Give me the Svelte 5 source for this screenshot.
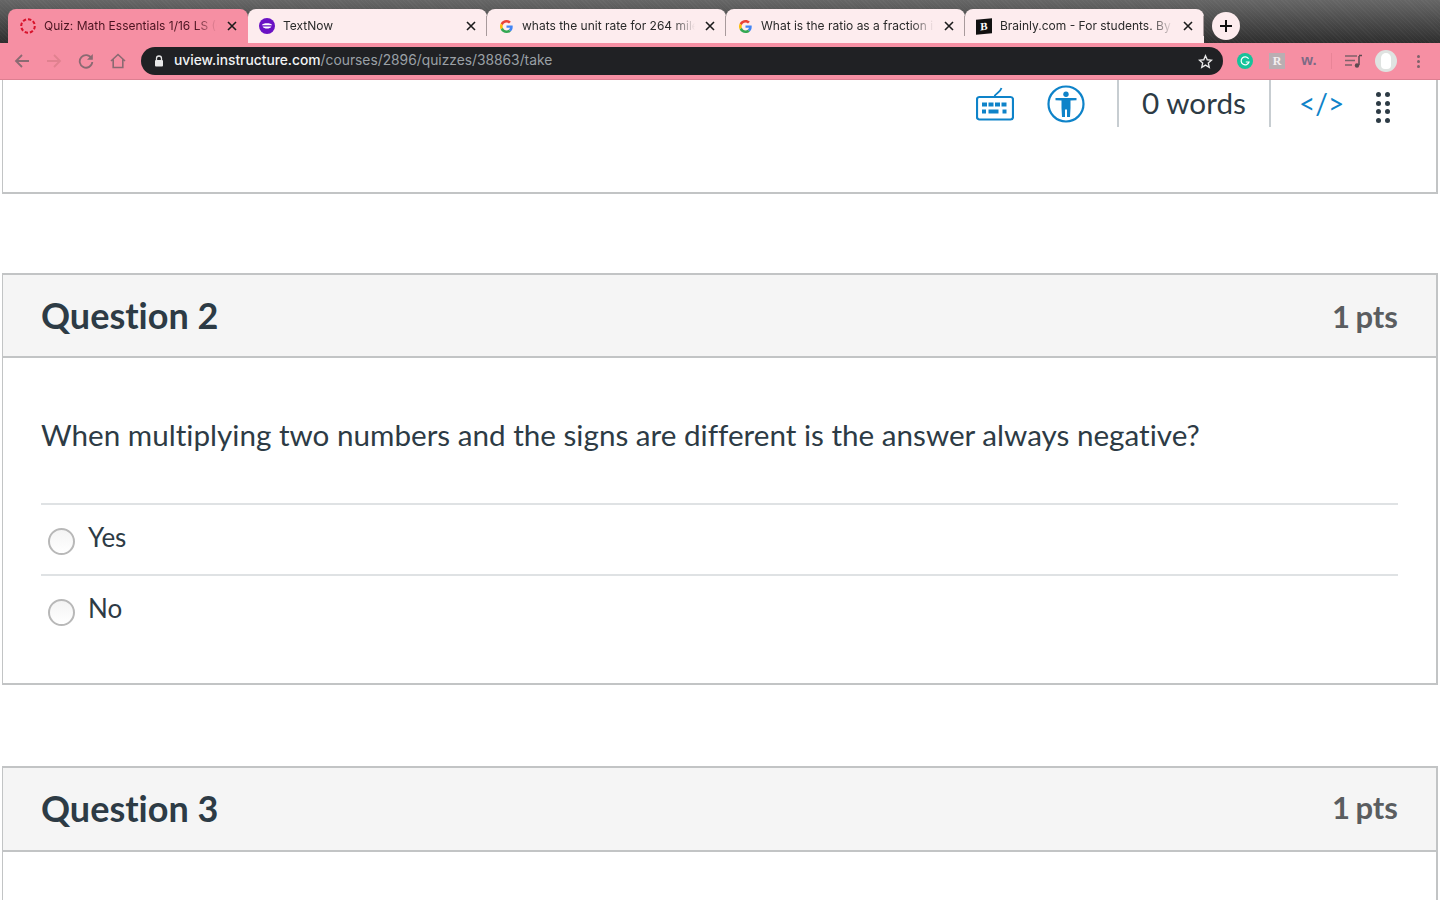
<script>
  const tabs = [
    { title: 'Quiz: Math Essentials 1/16 LS (Quiz)', icon: 'canvas', active: true },
    { title: 'TextNow', icon: 'textnow' },
    { title: 'whats the unit rate for 264 miles', icon: 'google' },
    { title: 'What is the ratio as a fraction in', icon: 'google' },
    { title: 'Brainly.com - For students. By students', icon: 'brainly' }
  ];
  const answers = ['Yes', 'No'];
</script>

<div class="browser">
  <div class="tabstrip">
    {#each tabs as tab}
      <div class="tab" class:active={tab.active}>
        <span class="favicon">
          {#if tab.icon === 'canvas'}
            <svg width="16" height="16" viewBox="0 0 16 16"><circle cx="8" cy="8" r="6.800" fill="none" stroke="#d8132c" stroke-width="2" stroke-dasharray="3.400 1.900"/></svg>
          {:else if tab.icon === 'textnow'}
            <svg width="16" height="16" viewBox="0 0 16 16"><circle cx="8" cy="8" r="8" fill="#6a12c4"/><path d="M2.800 7.200C4 4.600 12 4.600 13.200 7.200Z" fill="#fff"/><path d="M3.600 8.400H12.400C11 11.200 5 11.200 3.600 8.400Z" fill="#fff"/></svg>
          {:else if tab.icon === 'google'}
            <svg width="13" height="13" viewBox="0 0 48 48">
              <path fill="#EA4335" d="M24 9.500c3.500 0 6.700 1.200 9.200 3.600l6.900-6.900C35.900 2.400 30.500 0 24 0 14.600 0 6.500 5.400 2.600 13.200l8 6.200C12.500 13.700 17.800 9.500 24 9.500z"/>
              <path fill="#4285F4" d="M46.900 24.500c0-1.600-.1-3.100-.4-4.500H24v9h12.900c-.6 3-2.200 5.500-4.700 7.200l7.700 6c4.500-4.200 7-10.300 7-17.700z"/>
              <path fill="#FBBC05" d="M10.500 28.600c-.5-1.400-.8-3-.8-4.600s.3-3.200.8-4.600l-8-6.200C.9 16.500 0 20.100 0 24s.9 7.500 2.600 10.800l7.900-6.200z"/>
              <path fill="#34A853" d="M24 48c6.500 0 11.900-2.100 15.900-5.800l-7.700-6c-2.200 1.500-4.900 2.300-8.200 2.300-6.200 0-11.500-4.200-13.400-9.900l-8 6.200C6.500 42.600 14.600 48 24 48z"/>
            </svg>
          {:else}
            <span class="brainly">B</span>
          {/if}
        </span>
        <span class="title">{tab.title}</span>
        <svg class="close" width="10" height="10" viewBox="0 0 10 10"><path d="M1 1L9 9M9 1L1 9" stroke="#1c1c1c" stroke-width="1.600"/></svg>
      </div>
    {/each}
    <div class="newtab">
      <svg width="12" height="12" viewBox="0 0 12 12"><path d="M6 0V12M0 6H12" stroke="#111" stroke-width="2"/></svg>
    </div>
  </div>

  <div class="toolbar">
    <div class="navbtn">
      <svg width="16" height="16" viewBox="0 0 16 16"><path d="M15 8H2M8 2L2 8L8 14" fill="none" stroke="#8a6a72" stroke-width="1.800"/></svg>
    </div>
    <div class="navbtn">
      <svg width="16" height="16" viewBox="0 0 16 16"><path d="M1 8H14M8 2L14 8L8 14" fill="none" stroke="#e0818f" stroke-width="1.800"/></svg>
    </div>
    <div class="navbtn">
      <svg width="16" height="16" viewBox="0 0 16 16"><path d="M13.600 5.500A6.300 6.300 0 1 0 14.300 9" fill="none" stroke="#8a6a72" stroke-width="1.800"/><path d="M14.800 1V6.800H9Z" fill="#8a6a72"/></svg>
    </div>
    <div class="navbtn">
      <svg width="16" height="16" viewBox="0 0 16 16"><path d="M1 8L8 1.500L15 8M3.200 6.500V14.500H12.800V6.500" fill="none" stroke="#8a6a72" stroke-width="1.600"/></svg>
    </div>

    <div class="omnibox">
      <svg class="lock" width="10" height="12" viewBox="0 0 10 12"><path d="M2.500 5V3.500a2.500 2.500 0 0 1 5 0V5" fill="none" stroke="#e8e8e8" stroke-width="1.300"/><rect x="1" y="5" width="8" height="6.500" rx="1" fill="#e8e8e8"/></svg>
      <span class="url"><b>uview.instructure.com</b>/courses/2896/quizzes/38863/take</span>
      <svg class="star" width="15" height="15" viewBox="0 0 24 24"><path d="M12 2.800L14.800 9.200L21.700 9.900L16.500 14.500L18 21.300L12 17.800L6 21.300L7.500 14.500L2.300 9.900L9.200 9.200Z" fill="none" stroke="#e8e8e8" stroke-width="2.200"/></svg>
    </div>

    <div class="extensions">
      <div class="ext"><span class="grammarly"><svg width="10" height="10" viewBox="0 0 10 10"><path d="M8.600 2.800A4 4 0 1 0 9 6H5.800" fill="none" stroke="#fff" stroke-width="1.200"/></svg></span></div>
      <div class="ext"><span class="rbox">R</span></div>
      <div class="ext"><span class="wmark">w.</span></div>
      <span class="extsep"></span>
      <div class="ext">
        <svg width="18" height="14" viewBox="0 0 18 14"><path d="M0 2H12M0 6.500H10M0 11H7" stroke="#7d626a" stroke-width="1.300"/><path d="M14 2V11" stroke="#5d4a50" stroke-width="1.500"/><path d="M14 1.500H17" stroke="#5d4a50" stroke-width="1.500"/><circle cx="12" cy="11.500" r="2.200" fill="#5d4a50"/></svg>
      </div>
      <div class="ext"><span class="avatar"><span class="head"></span></span></div>
      <div class="ext menu"><i></i><i></i><i></i></div>
    </div>
  </div>
</div>

<div class="page">
  <section class="panel editor-end">
    <div class="editor-tools">
      <svg class="kbd" width="38" height="34" viewBox="0 0 38 34">
        <path d="M18.500 10C18.500 6 24 6.500 25.500 1" fill="none" stroke="#0e83c9" stroke-width="1.800"/>
        <rect x="1" y="10" width="36" height="22.500" rx="2.500" fill="none" stroke="#0e83c9" stroke-width="2.200"/>
        <path d="M6 17.500H11M12.500 17.500H17.500M19 17.500H24M25.500 17.500H30.500M6 24.500H10M12.500 24.500H22.500M26.500 24.500H30.500" stroke="#0e83c9" stroke-width="4"/>
      </svg>
      <svg class="a11y" width="38" height="38" viewBox="0 0 38 38">
        <circle cx="19" cy="19" r="17.500" fill="none" stroke="#0e83c9" stroke-width="2.200"/>
        <circle cx="19" cy="9.300" r="2.700" fill="#0e83c9"/>
        <path d="M8.500 13H29.500V15.200L23.500 15.600V23L23 32H20V24.500H18V32H15L14.500 23V15.600L8.500 15.200Z" fill="#0e83c9"/>
      </svg>
      <span class="toolsep"></span>
      <span class="words">0 words</span>
      <span class="toolsep"></span>
      <span class="htmlbtn">&lt;/&gt;</span>
      <span class="grip">
        {#each Array(8) as _}<i></i>{/each}
      </span>
    </div>
  </section>

  <section class="panel question">
    <header class="qhead">
      <h2>Question 2</h2>
      <span class="pts">1 pts</span>
    </header>
    <div class="qbody">
      <p class="qtext">When multiplying two numbers and the signs are different is the answer always negative?</p>
      <div class="answers">
        {#each answers as a}
          <label class="answer"><span class="radio"></span><span>{a}</span></label>
        {/each}
      </div>
    </div>
  </section>

  <section class="panel question last">
    <header class="qhead q3">
      <h2>Question 3</h2>
      <span class="pts">1 pts</span>
    </header>
  </section>
</div>

<style>
  :global(body) {
    margin: 0;
    background: #fff;
    overflow: hidden;
  }

  .browser {
    font-family: Inter, "Liberation Sans", sans-serif;
  }

  .tabstrip {
    height: 34px;
    padding: 9px 0 0 8px;
    display: flex;
    background:
      repeating-linear-gradient(45deg, rgba(255, 255, 255, 0.03) 0 1px, transparent 1px 3px),
      linear-gradient(#666, #595959 25%, #2e2e2e);
  }

  .tab {
    width: 239px;
    height: 34px;
    box-sizing: border-box;
    padding: 0 11px 0 11px;
    display: flex;
    align-items: center;
    background: #fdecee;
    border-radius: 8px 8px 0 0;
    font-size: 12px;
    color: #2a2a2a;
    position: relative;
  }

  .tab.active {
    width: 240px;
    padding-left: 12px;
    background: #f68fa3;
    color: #4a1420;
  }

  .tab:not(.active):not(:last-of-type)::after {
    content: "";
    position: absolute;
    right: 0;
    top: 7px;
    height: 20px;
    width: 1px;
    background: #a89a9c;
  }

  .favicon {
    width: 16px;
    height: 16px;
    flex: none;
    display: flex;
    align-items: center;
    justify-content: center;
    margin-right: 8px;
  }

  .brainly {
    width: 16px;
    height: 15px;
    background: #111;
    color: #fff;
    font: bold 11px/15px "Liberation Serif", serif;
    text-align: center;
    transform: skewY(-6deg);
  }

  .title {
    flex: 1;
    min-width: 0;
    padding-bottom: 2px;
    white-space: nowrap;
    overflow: hidden;
    -webkit-mask-image: linear-gradient(to right, #000 calc(100% - 26px), transparent calc(100% - 4px));
    mask-image: linear-gradient(to right, #000 calc(100% - 26px), transparent calc(100% - 4px));
  }

  .close {
    flex: none;
    margin: 0 0 1px 6px;
  }

  .newtab {
    width: 28px;
    height: 28px;
    border-radius: 50%;
    background: #fdecee;
    margin: 3px 0 0 8px;
    display: flex;
    align-items: center;
    justify-content: center;
  }

  .toolbar {
    height: 32px;
    padding: 4px 0 0 6px;
    display: flex;
    align-items: flex-start;
    background: #f68fa3;
    border-bottom: 1px solid #dd7f91;
  }

  .navbtn {
    width: 32px;
    height: 28px;
    display: flex;
    align-items: center;
    justify-content: center;
  }

  .omnibox {
    width: 1082px;
    height: 28px;
    margin-left: 7px;
    box-sizing: border-box;
    padding: 0 10px 0 13px;
    display: flex;
    align-items: center;
    background: #202124;
    border-radius: 14px;
    font-size: 13.800px;
    color: #9aa0a6;
  }

  .url {
    flex: 1;
    margin: 0 0 2px 10px;
  }

  .url b {
    font-weight: 500;
    color: #f1f3f4;
  }

  .extensions {
    display: flex;
    align-items: center;
    height: 28px;
    margin-left: 6px;
  }

  .ext {
    width: 32px;
    height: 28px;
    display: flex;
    align-items: center;
    justify-content: center;
  }

  .grammarly {
    width: 16px;
    height: 16px;
    border-radius: 50%;
    background: #15c39a;
    display: flex;
    align-items: center;
    justify-content: center;
  }

  .rbox {
    width: 16px;
    height: 16px;
    background: #b9aeb2;
    color: #f4eef0;
    font: bold 12px/16px "Liberation Serif", serif;
    text-align: center;
  }

  .wmark {
    font: bold 15px/1 "Liberation Sans", sans-serif;
    color: #7d6a85;
    margin-bottom: 4px;
  }

  .extsep {
    width: 1px;
    height: 16px;
    margin: 0 6px;
    background: #e88497;
  }

  .avatar {
    width: 22px;
    height: 22px;
    border-radius: 50%;
    background: #dfe3e1;
    display: flex;
    justify-content: center;
    align-items: center;
  }

  .head {
    width: 10px;
    height: 16px;
    background: #fff;
    border-radius: 5px 5px 4px 4px;
  }

  .menu {
    flex-direction: column;
    gap: 2px;
  }

  .menu i {
    width: 3px;
    height: 3px;
    border-radius: 50%;
    background: #7d626a;
  }

  .page {
    padding: 0 2px;
    font-family: Lato, "Liberation Sans", sans-serif;
    font-variant-ligatures: none;
    color: #2d3b45;
  }

  .panel {
    border: 2px solid #c2c4c5;
    border-left-width: 1px;
    box-sizing: border-box;
  }

  .editor-end {
    border-top: none;
    height: 114px;
  }

  .editor-tools {
    height: 47px;
    display: flex;
    align-items: center;
    justify-content: flex-end;
    padding-right: 46px;
  }

  .kbd {
    margin-top: 1px;
  }

  .a11y {
    margin: 1px 32px 0 33px;
  }

  .toolsep {
    width: 2px;
    height: 47px;
    background: #c7cdd1;
  }

  .words {
    font-size: 29.700px;
    width: 104px;
    margin: -2px 23px 0 23px;
    white-space: nowrap;
  }

  .htmlbtn {
    font-size: 28px;
    color: #0e83c9;
    width: 43px;
    margin: -2px 34px 0 28px;
    white-space: nowrap;
  }

  .grip {
    display: grid;
    grid-template-columns: 5px 5px;
    gap: 3.500px 4px;
    margin-top: 8px;
  }

  .grip i {
    width: 5px;
    height: 5px;
    border-radius: 50%;
    background: #2d3b45;
  }

  .question {
    margin-top: 79px;
  }

  .qhead {
    height: 83px;
    box-sizing: border-box;
    padding: 0 38px;
    display: flex;
    align-items: center;
    justify-content: space-between;
    background: #f5f5f5;
    border-bottom: 2px solid #c2c4c5;
  }

  .q3 {
    height: 84px;
  }

  h2 {
    margin: 0 0 2px;
    font-size: 36px;
    font-weight: 700;
    line-height: 1;
  }

  .pts {
    font-size: 31px;
    font-weight: 700;
    word-spacing: -2px;
    color: #5a5d60;
  }

  .q3 .pts {
    margin: 0 0 4px;
  }

  .qbody {
    padding: 0 38px;
    height: 325px;
    box-sizing: border-box;
  }

  .qtext {
    margin: 0;
    padding-top: 59px;
    height: 145px;
    box-sizing: border-box;
    font-size: 29.640px;
    line-height: 36px;
  }

  .answer {
    height: 71px;
    box-sizing: border-box;
    border-top: 2px solid #dfe2e4;
    display: flex;
    font-size: 26px;
    line-height: 32px;
    padding-top: 16px;
  }

  .radio {
    width: 27px;
    height: 27px;
    box-sizing: border-box;
    border: 2px solid #b8b8b8;
    border-radius: 50%;
    margin: 7px 13px 0 7px;
    background: linear-gradient(#f4f4f4, #fff);
  }

  .last {
    margin-top: 81px;
    height: 200px;
  }
</style>
